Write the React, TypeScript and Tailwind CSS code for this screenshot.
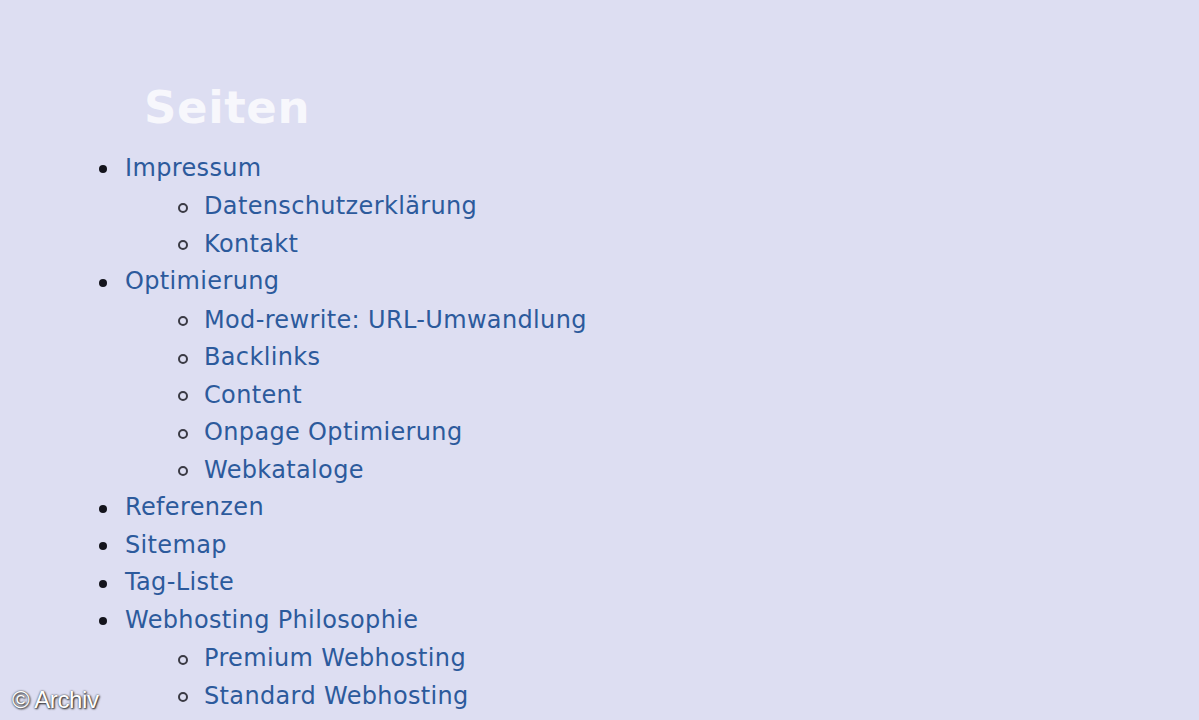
const PAGES: { label: string; children?: string[] }[] = [
  { label: 'Impressum', children: ['Datenschutzerklärung', 'Kontakt'] },
  {
    label: 'Optimierung',
    children: ['Mod-rewrite: URL-Umwandlung', 'Backlinks', 'Content', 'Onpage Optimierung', 'Webkataloge'],
  },
  { label: 'Referenzen' },
  { label: 'Sitemap' },
  { label: 'Tag-Liste' },
  { label: 'Webhosting Philosophie', children: ['Premium Webhosting', 'Standard Webhosting'] },
]

function Item({ label, sub }: { label: string; sub?: boolean }) {
  return (
    <li className="flex items-center h-[37.5px]">
      {sub ? (
        <span className="w-[10px] h-[10px] rounded-full border-2 border-[#3a3a44] mr-[16px] mt-[3px]" />
      ) : (
        <span className="w-[8px] h-[8px] rounded-full bg-[#14141c] mr-[18px] mt-[3px]" />
      )}
      <a className="text-[#2c5a9c] text-[24px] tracking-[0.35px]">{label}</a>
    </li>
  )
}

export default function App() {
  return (
    <div
      className="w-[1199px] h-[720px] bg-[#dddef2] relative overflow-hidden"
      style={{ fontFamily: '"DejaVu Sans", Verdana, sans-serif' }}
    >
      <div className="pt-[80px] pl-[99px]">
        <h2 className="text-[#f7f7fc] font-bold text-[45px] leading-[56px] pl-[45px] tracking-[0.6px]">Seiten</h2>
        <ul className="mt-[13px]">
          {PAGES.map((p) => (
            <div key={p.label}>
              <Item label={p.label} />
              {p.children && (
                <ul className="pl-[79px] mt-[1px]">
                  {p.children.map((c) => (
                    <Item key={c} label={c} sub />
                  ))}
                </ul>
              )}
            </div>
          ))}
        </ul>
      </div>
      <div
        className="absolute left-[12px] top-[682px] text-white text-[24px] tracking-[-0.4px]"
        style={{ fontFamily: '"Liberation Sans", Arial, sans-serif', textShadow: '0 0 2px #333, 1px 1px 2px #222' }}
      >
        © Archiv
      </div>
    </div>
  )
}
